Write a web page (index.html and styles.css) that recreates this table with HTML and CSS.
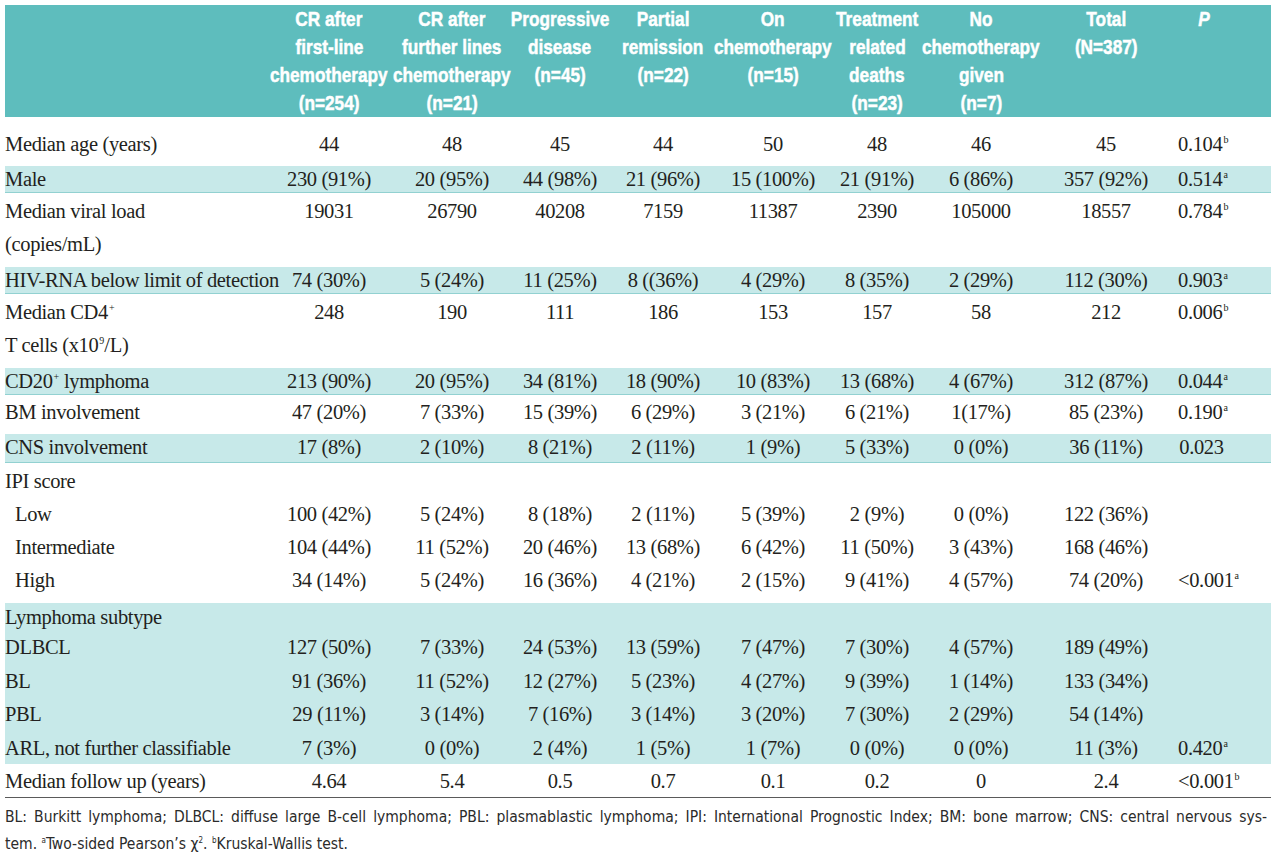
FILE: index.html
```html
<!DOCTYPE html>
<html lang="en">
<head>
<meta charset="utf-8">
<title>Table</title>
<link rel="stylesheet" href="styles.css">
</head>
<body>
<div class="wrap">
<table class="tbl">
<colgroup>
<col class="w-lab"><col class="w1"><col class="w2"><col class="w3"><col class="w4"><col class="w5"><col class="w6"><col class="w7"><col class="w8"><col class="w9">
</colgroup>
<thead>
<tr class="head">
<th></th>
<th><div class="hd"><span>CR after</span><span>first-line</span><span>chemotherapy</span><span>(n=254)</span></div></th>
<th><div class="hd"><span>CR after</span><span>further lines</span><span>chemotherapy</span><span>(n=21)</span></div></th>
<th><div class="hd"><span>Progressive</span><span>disease</span><span>(n=45)</span></div></th>
<th><div class="hd"><span>Partial</span><span>remission</span><span>(n=22)</span></div></th>
<th><div class="hd"><span>On</span><span>chemotherapy</span><span>(n=15)</span></div></th>
<th><div class="hd"><span>Treatment</span><span>related</span><span>deaths</span><span>(n=23)</span></div></th>
<th><div class="hd"><span>No</span><span>chemotherapy</span><span>given</span><span>(n=7)</span></div></th>
<th><div class="hd"><span>Total</span><span>(N=387)</span></div></th>
<th class="p"><div class="hd"><span><i>P</i></span></div></th>
</tr>
</thead>
<tbody>
<tr class="age">
<td class="lab">Median age (years)</td><td>44</td><td>48</td><td>45</td><td>44</td><td>50</td><td>48</td><td>46</td><td>45</td><td class="p">0.104<sup class="s">b</sup></td>
</tr>
<tr class="sh">
<td class="lab">Male</td><td>230 (91%)</td><td>20 (95%)</td><td>44 (98%)</td><td>21 (96%)</td><td>15 (100%)</td><td>21 (91%)</td><td>6 (86%)</td><td>357 (92%)</td><td class="p">0.514<sup class="s">a</sup></td>
</tr>
<tr class="two">
<td class="lab">Median viral load<br>(copies/mL)</td><td>19031</td><td>26790</td><td>40208</td><td>7159</td><td>11387</td><td>2390</td><td>105000</td><td>18557</td><td class="p">0.784<sup class="s">b</sup></td>
</tr>
<tr class="sh">
<td class="lab">HIV-RNA below limit of detection</td><td>74 (30%)</td><td>5 (24%)</td><td>11 (25%)</td><td>8 ((36%)</td><td>4 (29%)</td><td>8 (35%)</td><td>2 (29%)</td><td>112 (30%)</td><td class="p">0.903<sup class="s">a</sup></td>
</tr>
<tr class="two">
<td class="lab">Median CD4<sup class="s">+</sup><br>T cells (x10<sup class="s">9</sup>/L)</td><td>248</td><td>190</td><td>111</td><td>186</td><td>153</td><td>157</td><td>58</td><td>212</td><td class="p">0.006<sup class="s">b</sup></td>
</tr>
<tr class="sh">
<td class="lab">CD20<sup class="s">+</sup> lymphoma</td><td>213 (90%)</td><td>20 (95%)</td><td>34 (81%)</td><td>18 (90%)</td><td>10 (83%)</td><td>13 (68%)</td><td>4 (67%)</td><td>312 (87%)</td><td class="p">0.044<sup class="s">a</sup></td>
</tr>
<tr class="bm">
<td class="lab">BM involvement</td><td>47 (20%)</td><td>7 (33%)</td><td>15 (39%)</td><td>6 (29%)</td><td>3 (21%)</td><td>6 (21%)</td><td>1(17%)</td><td>85 (23%)</td><td class="p">0.190<sup class="s">a</sup></td>
</tr>
<tr class="sh cns">
<td class="lab">CNS involvement</td><td>17 (8%)</td><td>2 (10%)</td><td>8 (21%)</td><td>2 (11%)</td><td>1 (9%)</td><td>5 (33%)</td><td>0 (0%)</td><td>36 (11%)</td><td class="p">0.023</td>
</tr>
<tr class="ipi">
<td class="lab">IPI score</td><td></td><td></td><td></td><td></td><td></td><td></td><td></td><td></td><td class="p"></td>
</tr>
<tr>
<td class="lab ind">Low</td><td>100 (42%)</td><td>5 (24%)</td><td>8 (18%)</td><td>2 (11%)</td><td>5 (39%)</td><td>2 (9%)</td><td>0 (0%)</td><td>122 (36%)</td><td class="p"></td>
</tr>
<tr>
<td class="lab ind">Intermediate</td><td>104 (44%)</td><td>11 (52%)</td><td>20 (46%)</td><td>13 (68%)</td><td>6 (42%)</td><td>11 (50%)</td><td>3 (43%)</td><td>168 (46%)</td><td class="p"></td>
</tr>
<tr class="high">
<td class="lab ind">High</td><td>34 (14%)</td><td>5 (24%)</td><td>16 (36%)</td><td>4 (21%)</td><td>2 (15%)</td><td>9 (41%)</td><td>4 (57%)</td><td>74 (20%)</td><td class="p">&lt;0.001<sup class="s">a</sup></td>
</tr>
<tr class="grp g1">
<td class="lab">Lymphoma subtype</td><td></td><td></td><td></td><td></td><td></td><td></td><td></td><td></td><td class="p"></td>
</tr>
<tr class="grp">
<td class="lab">DLBCL</td><td>127 (50%)</td><td>7 (33%)</td><td>24 (53%)</td><td>13 (59%)</td><td>7 (47%)</td><td>7 (30%)</td><td>4 (57%)</td><td>189 (49%)</td><td class="p"></td>
</tr>
<tr class="grp">
<td class="lab">BL</td><td>91 (36%)</td><td>11 (52%)</td><td>12 (27%)</td><td>5 (23%)</td><td>4 (27%)</td><td>9 (39%)</td><td>1 (14%)</td><td>133 (34%)</td><td class="p"></td>
</tr>
<tr class="grp">
<td class="lab">PBL</td><td>29 (11%)</td><td>3 (14%)</td><td>7 (16%)</td><td>3 (14%)</td><td>3 (20%)</td><td>7 (30%)</td><td>2 (29%)</td><td>54 (14%)</td><td class="p"></td>
</tr>
<tr class="grp g5">
<td class="lab">ARL, not further classifiable</td><td>7 (3%)</td><td>0 (0%)</td><td>2 (4%)</td><td>1 (5%)</td><td>1 (7%)</td><td>0 (0%)</td><td>0 (0%)</td><td>11 (3%)</td><td class="p">0.420<sup class="s">a</sup></td>
</tr>
<tr class="last">
<td class="lab">Median follow up (years)</td><td>4.64</td><td>5.4</td><td>0.5</td><td>0.7</td><td>0.1</td><td>0.2</td><td>0</td><td>2.4</td><td class="p">&lt;0.001<sup class="s">b</sup></td>
</tr>
</tbody>
</table>
<div class="foot">
<p class="fn1">BL: Burkitt lymphoma; DLBCL: diffuse large B-cell lymphoma; PBL: plasmablastic lymphoma; IPI: International Prognostic Index; BM: bone marrow; CNS: central nervous sys-</p>
<p class="fn2">tem. <sup class="fs">a</sup>Two-sided Pearson’s χ<sup class="fs">2</sup>. <sup class="fs">b</sup>Kruskal-Wallis test.</p>
</div>
</div>
</body>
</html>
```
FILE: styles.css
```css
html, body {
  margin: 0;
  padding: 0;
  background: #ffffff;
}

body {
  font-family: "Liberation Serif", "Times New Roman", serif;
  color: #231f20;
}

.wrap {
  padding: 5px 0 0 5px;
  width: 1266px;
}

.tbl {
  border-collapse: collapse;
  table-layout: fixed;
  width: 1266px;
  font-size: 20.5px;
  letter-spacing: -0.35px;
}

.w-lab { width: 263px; }
.w1 { width: 122px; }
.w2 { width: 124px; }
.w3 { width: 92px; }
.w4 { width: 114px; }
.w5 { width: 106px; }
.w6 { width: 102px; }
.w7 { width: 106px; }
.w8 { width: 144px; }
.w9 { width: 93px; }

.head th {
  background: #5ebdbd;
  color: #ffffff;
  font-family: "Liberation Sans", Arial, sans-serif;
  font-weight: bold;
  font-size: 21px;
  letter-spacing: 0;
  line-height: 28px;
  padding: 0;
  vertical-align: top;
  text-align: center;
  white-space: nowrap;
  -webkit-text-stroke: 0.5px #ffffff;
}

.head th.p {
  padding-right: 40px;
}

.hd {
  display: flex;
  flex-direction: column;
  align-items: center;
}

.hd span {
  display: block;
  white-space: nowrap;
  transform: scaleX(0.82);
  transform-origin: 50% 50%;
}

.tbl td {
  padding: 0;
  line-height: 33px;
  vertical-align: top;
  text-align: center;
  white-space: nowrap;
}

.tbl td.lab {
  text-align: left;
}

.tbl td.ind {
  padding-left: 10px;
}

.tbl td.p {
  padding-right: 46px;
}

.s {
  font-size: 10px;
  line-height: 0;
  vertical-align: 8px;
  letter-spacing: 0;
  margin-left: 1px;
}

tr.age td {
  padding-top: 11px;
  padding-bottom: 5px;
}

tr.sh td {
  background: #c7e9e9;
  line-height: 26px;
  border-bottom: 1px solid #92d1d1;
}

tr.sh.cns td {
  line-height: 27px;
  padding-bottom: 1px;
}

tr.two td {
  padding-top: 2px;
  padding-bottom: 6px;
}

tr.bm td {
  padding-top: 1px;
  padding-bottom: 5px;
}

tr.ipi td {
  padding-top: 2px;
}

tr.high td {
  padding-bottom: 6px;
}

tr.grp td {
  background: #c7e9e9;
  line-height: 33.5px;
}

tr.grp.g1 td {
  line-height: 28px;
}

tr.grp.g5 td {
  line-height: 32px;
}

tr.last td {
  padding-top: 2px;
  line-height: 31px;
  border-bottom: 1px solid #5a5a5a;
}

.foot {
  width: 1262px;
  padding-top: 6px;
  font-family: "DejaVu Sans Condensed", "DejaVu Sans", "Liberation Sans", sans-serif;
  font-stretch: condensed;
  font-size: 15.5px;
  line-height: 27px;
  color: #2b2b2b;
}

.foot p {
  margin: 0;
  white-space: nowrap;
}

.fn1 {
  text-align: justify;
  text-align-last: justify;
}

.fs {
  font-size: 8px;
  line-height: 0;
  vertical-align: 6px;
}
```
